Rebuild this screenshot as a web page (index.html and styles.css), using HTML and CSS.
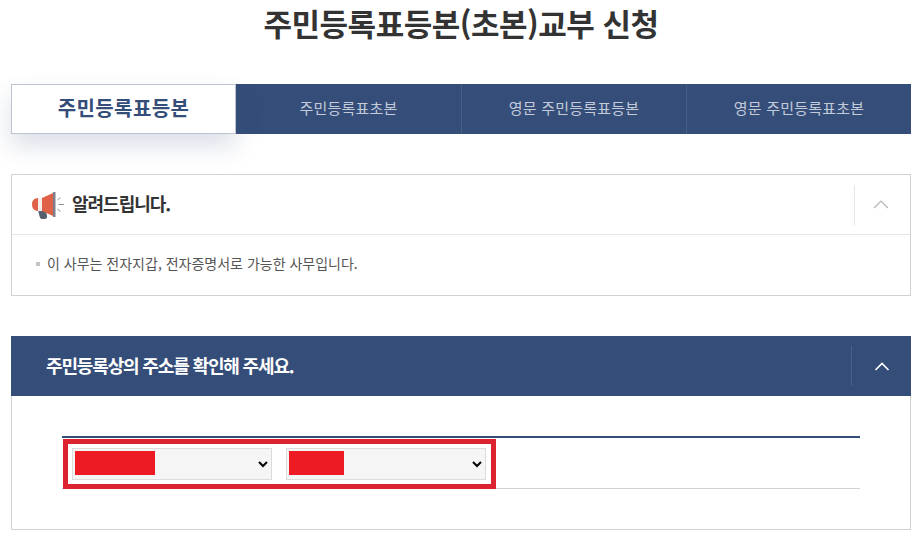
FILE: index.html
```html
<!DOCTYPE html>
<html lang="ko">
<head>
    <meta charset="UTF-8">
    <title>주민등록표등본(초본)교부 신청</title>
    <link rel="stylesheet" href="styles.css">
</head>
<body>
    <div class="wrap">
        <h1 class="page-title">주민등록표등본(초본)교부 신청</h1>

        <ul class="tabs">
            <li class="tab active">주민등록표등본</li>
            <li class="tab">주민등록표초본</li>
            <li class="tab">영문 주민등록표등본</li>
            <li class="tab">영문 주민등록표초본</li>
        </ul>

        <!-- Notice -->
        <div class="notice">
            <div class="notice-head">
                <svg class="notice-icon" width="32" height="28" viewBox="0 0 32 28">
                    <path d="M6 19 L14 20 L15 25 Q15.5 28 12.5 28 L10 28 Q8 28 7.5 25 Z" fill="#56606e"/>
                    <path d="M6 7 H7 V20 H6 Q0 20 0 13.5 Q0 7 6 7 Z" fill="#df6248"/>
                    <rect x="6" y="7" width="4" height="13" fill="#f6eee8"/>
                    <path d="M10 7 L21 2 V25 L10 20 Z" fill="#df6248"/>
                    <rect x="21" y="1" width="2.5" height="25" fill="#7c808c"/>
                    <path d="M25.5 9 L28.5 6.5 M26.5 13.5 H32 M25.5 18 L28.5 20.5" stroke="#8a8f98" stroke-width="1" fill="none"/>
                </svg>
                <strong class="notice-title">알려드립니다.</strong>
                <button class="toggle" type="button">
                    <svg width="16" height="9" viewBox="0 0 16 9"><path d="M1 8 L8 1 L15 8" stroke="#b4b4b4" stroke-width="1.2" fill="none"/></svg>
                </button>
            </div>
            <div class="notice-body">
                <p class="notice-text">이 사무는 전자지갑, 전자증명서로 가능한 사무입니다.</p>
            </div>
        </div>

        <!-- Address section -->
        <div class="section">
            <div class="section-head">
                <h2 class="section-title">주민등록상의 주소를 확인해 주세요.</h2>
                <button class="toggle" type="button">
                    <svg width="16" height="9" viewBox="0 0 16 9"><path d="M1.5 8 L8 1.5 L14.5 8" stroke="#fff" stroke-width="1.6" fill="none"/></svg>
                </button>
            </div>
            <div class="section-body">
                <div class="address-row">
                    <div class="highlight">
                        <div class="select-box">
                            <select class="addr-select"><option></option></select>
                            <span class="redact redact-long"></span>
                        </div>
                        <div class="select-box">
                            <select class="addr-select"><option></option></select>
                            <span class="redact redact-short"></span>
                        </div>
                    </div>
                </div>
            </div>
        </div>
    </div>
</body>
</html>
```

FILE: styles.css
```css
* {
    box-sizing: border-box;
}

body {
    margin: 0;
    background-color: #fff;
    color: #333;
    font-family: "Noto Sans CJK KR", "Noto Sans", sans-serif;
    overflow: hidden;
}

.wrap {
    width: 900px;
    height: 537px;
    margin-left: 11px;
}

.page-title {
    margin: 0;
    height: 84px;
    padding-top: 1px;
    font-size: 31px;
    line-height: 44px;
    font-weight: 700;
    letter-spacing: -0.5px;
    text-align: center;
    color: #333;
}

/* Tabs */
.tabs {
    display: flex;
    height: 50px;
    margin: 0;
    padding: 0;
    list-style: none;
    background-color: #354d79;
}

.tab {
    flex: 0 0 225px;
    display: flex;
    align-items: center;
    justify-content: center;
    padding-bottom: 3px;
    font-size: 15px;
    letter-spacing: 0.2px;
    color: #c3cbd9;
    border-left: 1px solid #475e87;
}

.tab.active {
    background-color: #fff;
    border: 1px solid #bcc4d1;
    color: #354d79;
    font-size: 20px;
    font-weight: 700;
    letter-spacing: 0.4px;
    box-shadow: 0 12px 24px rgba(53, 77, 121, 0.18);
}

.tab.active + .tab {
    border-left: none;
}

/* Notice */
.notice {
    height: 122px;
    margin-top: 40px;
    border: 1px solid #d2d2d2;
}

.notice-head {
    display: flex;
    align-items: center;
    height: 60px;
    padding-left: 20px;
    border-bottom: 1px solid #e6e6e6;
}

.notice-icon {
    margin-right: 8px;
}

.notice-title {
    flex: 1;
    padding-bottom: 3px;
    font-size: 18px;
    font-weight: 700;
    letter-spacing: -1px;
    color: #333;
}

.toggle {
    display: flex;
    align-items: center;
    justify-content: center;
    width: 53px;
    height: 40px;
    margin-right: 3px;
    padding: 0;
    background: none;
    border: none;
    border-left: 1px solid #e6e6e6;
}

.notice-body {
    padding: 18px 23px;
}

.notice-text {
    position: relative;
    margin: 0;
    padding-left: 12px;
    font-size: 14px;
    line-height: 20px;
    color: #555;
}

.notice-text::before {
    content: "";
    position: absolute;
    left: 1px;
    top: 9px;
    width: 4px;
    height: 4px;
    background-color: #c4c4c4;
}

/* Address section */
.section {
    margin-top: 40px;
}

.section-head {
    display: flex;
    align-items: center;
    height: 60px;
    padding-left: 35px;
    background-color: #354d79;
}

.section-head .toggle {
    width: 60px;
    margin-right: 0;
    border-left-color: #4a6089;
}

.section-title {
    flex: 1;
    margin: 0;
    padding-bottom: 3px;
    font-size: 18px;
    font-weight: 700;
    letter-spacing: -1.15px;
    color: #fff;
}

.section-body {
    height: 134px;
    padding: 40px 50px 0 50px;
    border: 1px solid #d2d2d2;
    border-top: none;
}

.address-row {
    width: 798px;
    height: 53px;
    padding: 1px 0 0 1px;
    border-top: 2px solid #354d79;
    border-bottom: 1px solid #d2d2d2;
}

.highlight {
    display: flex;
    gap: 14px;
    width: 433px;
    height: 50px;
    padding: 4px;
    border: 5px solid #dc2431;
}

.select-box {
    position: relative;
    width: 200px;
    height: 32px;
}

.addr-select {
    display: block;
    width: 100%;
    height: 100%;
    background-color: #f5f5f5;
    border: 1px solid #dcdcdc;
    border-radius: 0;
    font-family: inherit;
    font-size: 13px;
}

.redact {
    position: absolute;
    left: 3px;
    top: 3px;
    height: 24px;
    background-color: #ed1c24;
}

.redact-long {
    width: 80px;
}

.redact-short {
    width: 55px;
}
```
